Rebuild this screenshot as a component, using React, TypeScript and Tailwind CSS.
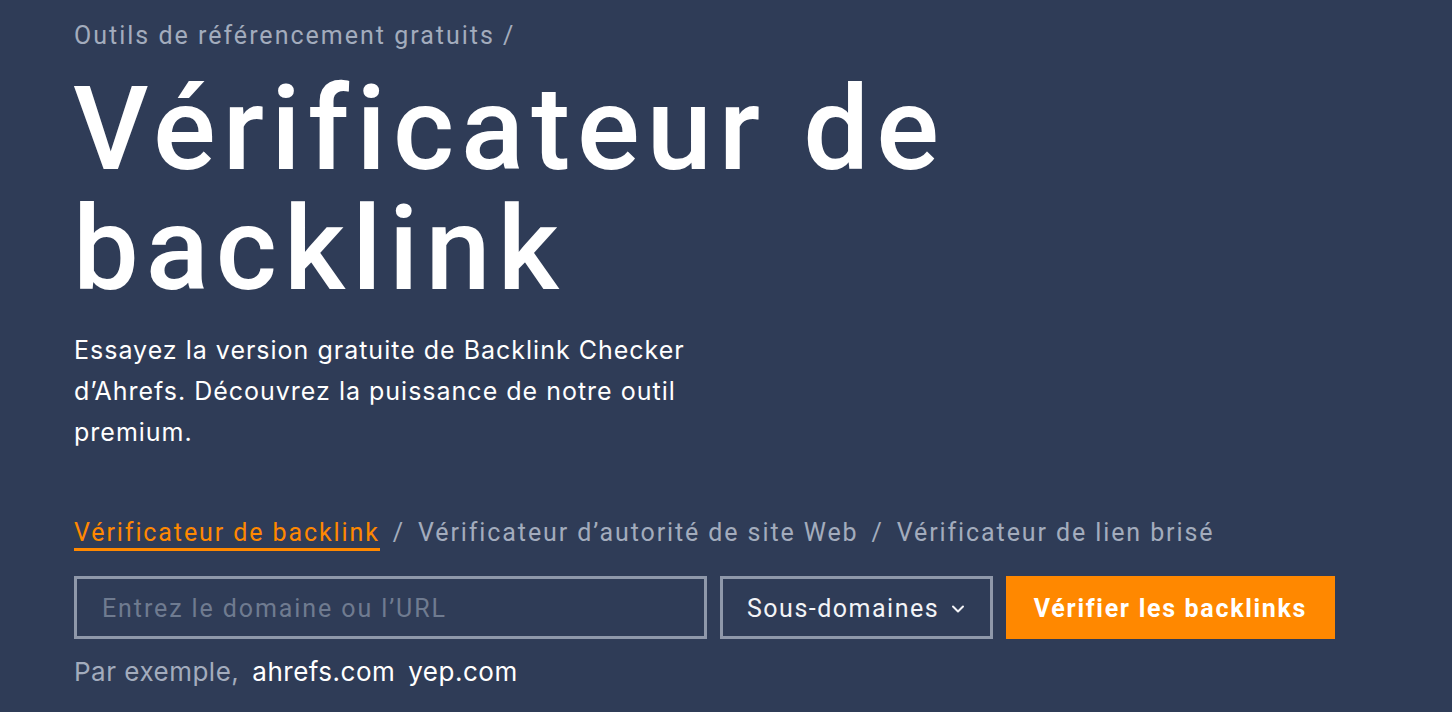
import React from "react";

export default function App() {
  return (
    <div className="min-h-screen w-full bg-[#2f3c57] font-['Roboto',sans-serif] text-white">
      <div className="pl-[74px] pt-[20px]">
        <div className="text-[25px] leading-[32px] tracking-[2px] text-[#a3acbd]">
          Outils de référencement gratuits /
        </div>

        <h1 className="mt-[17px] -ml-[1px] text-[117px] font-medium leading-[120px] tracking-[7px] text-white">
          Vérificateur de
          <br />
          backlink
        </h1>

        <p className="mt-[21px] w-[640px] font-['Inter',sans-serif] text-[25px] leading-[41px] tracking-[1px] text-white">
          Essayez la version gratuite de Backlink Checker d’Ahrefs. Découvrez la puissance de notre outil premium.
        </p>

        <div className="mt-[65px] flex items-start text-[25px] leading-[30px] tracking-[1.9px]">
          <span className="border-b-[3px] border-[#ff8800] text-[#ff8800]">Vérificateur de backlink</span>
          <span className="mx-[13px] text-[#a3acbd]">/</span>
          <span className="text-[#a3acbd]">Vérificateur d’autorité de site Web</span>
          <span className="mx-[13px] text-[#a3acbd]">/</span>
          <span className="text-[#a3acbd]">Vérificateur de lien brisé</span>
        </div>

        <div className="mt-[25px] flex items-stretch gap-[13px]">
          <div className="flex h-[63px] w-[633px] items-center border-[3px] border-[#8f98aa] pl-[25px] pt-[2px]">
            <span className="text-[25px] tracking-[1.9px] text-[#6f7b90]">Entrez le domaine ou l’URL</span>
          </div>
          <div className="flex h-[63px] w-[273px] items-center border-[3px] border-[#8f98aa] pl-[24px] pt-[2px]">
            <span className="text-[25px] tracking-[1.5px] text-[#f3f4f7]">Sous-domaines</span>
            <svg className="ml-[12px]" width="14" height="10" viewBox="0 0 14 10" fill="none">
              <path d="M2 2.5 L7 7.5 L12 2.5" stroke="#f3f4f7" strokeWidth="2" strokeLinecap="round" strokeLinejoin="round" />
            </svg>
          </div>
          <div className="flex h-[63px] w-[329px] items-center justify-center bg-[#ff8800] pt-[2px]">
            <span className="text-[25px] font-bold tracking-[1.7px] text-white">Vérifier les backlinks</span>
          </div>
        </div>

        <div className="mt-[16px] flex items-center font-['Inter',sans-serif] text-[26px] leading-[34px] tracking-[0.5px]">
          <span className="text-[#a3acbd]">Par exemple,</span>
          <span className="ml-[13px] text-white">ahrefs.com</span>
          <span className="ml-[13px] text-white">yep.com</span>
        </div>
      </div>
    </div>
  );
}
